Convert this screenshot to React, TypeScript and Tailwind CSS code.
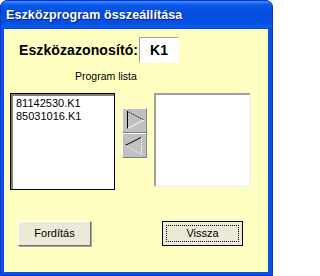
import React from "react";

const font = { fontFamily: '"Liberation Sans", Arial, sans-serif' };

const ArrowButton = ({ dir }: { dir: "right" | "left" }) => (
  <button className="w-[25px] h-[25px] bg-[#c0c0c0] border border-t-white border-l-white border-r-[#808080] border-b-[#808080] p-0 flex">
    <svg width="23" height="23" viewBox="0 0 23 23" shapeRendering="crispEdges">
      {dir === "right" ? (
        <>
          <line x1="4.5" y1="2" x2="4.5" y2="20" stroke="#000" />
          <line x1="4.5" y1="2.5" x2="21" y2="11" stroke="#000" strokeDasharray="1 1" shapeRendering="auto" />
          <line x1="4.5" y1="19.5" x2="21" y2="11" stroke="#fff" shapeRendering="auto" />
        </>
      ) : (
        <>
          <line x1="2" y1="11.5" x2="19" y2="3" stroke="#000" shapeRendering="auto" />
          <line x1="18.5" y1="3" x2="18.5" y2="21" stroke="#fff" strokeDasharray="1 1" />
          <line x1="2" y1="11.5" x2="19" y2="20.5" stroke="#fff" strokeDasharray="1 1" shapeRendering="auto" />
        </>
      )}
    </svg>
  </button>
);

export default function App() {
  return (
    <div
      className="w-[273px] h-[276px] flex flex-col rounded-t-[7px] bg-[#0552e2] border border-[#0831d9] overflow-hidden"
      style={font}
    >
      {/* title bar */}
      <div className="h-[28px] shrink-0 flex items-center pl-[5px] bg-[linear-gradient(to_bottom,#3d8cfb_0%,#0a58e8_14%,#034cde_45%,#0550e4_80%,#0d5cf0_92%,#0444d6_100%)]">
        <span className="text-white font-bold text-[12.5px] tracking-[0.1px] [text-shadow:1px_1px_0_#0a1e8c]">
          Eszközprogram összeállítása
        </span>
      </div>

      {/* client area */}
      <div className="flex-1 ml-[3px] mr-[4px] mb-[3px] bg-[#ffffc1] flex flex-col">
        <div className="flex items-center mt-[8px] pl-[15px]">
          <span className="text-[14px] font-bold text-black leading-none tracking-[0.1px]">
            Eszközazonosító:
          </span>
          <div className="ml-[1px] w-[40px] h-[26px] bg-white border border-t-[#a0a0a0] border-l-[#a0a0a0] border-r-white border-b-white flex items-center justify-center">
            <span className="text-[14px] font-bold text-black leading-none">K1</span>
          </div>
        </div>

        <div className="mt-[7px] pl-[71px] text-[10.5px] leading-[13px] text-black">
          Program lista
        </div>

        <div className="flex mt-[10px] pl-[6px]">
          <div className="w-[105px] h-[97px] border border-black bg-white">
            <div className="h-full border-t-2 border-l-2 border-[#808080] pl-[3px] pt-[1px] text-[11px] leading-[13px] text-black">
              <div>81142530.K1</div>
              <div>85031016.K1</div>
            </div>
          </div>
          <div className="ml-[7px] mt-[15px] flex flex-col">
            <ArrowButton dir="right" />
            <ArrowButton dir="left" />
          </div>
          <div className="ml-[7px] w-[97px] h-[94px] bg-white border-2 border-t-[#a0a0a0] border-l-[#a0a0a0] border-r-[#f4f4f0] border-b-[#f4f4f0]" />
        </div>

        <div className="flex mt-[31px] pl-[14px]">
          <button className="w-[73px] h-[25px] bg-[#ece9d8] border border-t-white border-l-white border-r-[#716f64] border-b-[#716f64] shadow-[1px_1px_0_#aca899] text-[11px] text-black">
            Fordítás
          </button>
          <button className="ml-[71px] w-[81px] h-[25px] bg-[#ece9d8] border border-black p-[3px] text-[11px] text-black">
            <div className="h-full border border-dotted border-black flex items-center justify-center">
              Vissza
            </div>
          </button>
        </div>
      </div>
    </div>
  );
}
